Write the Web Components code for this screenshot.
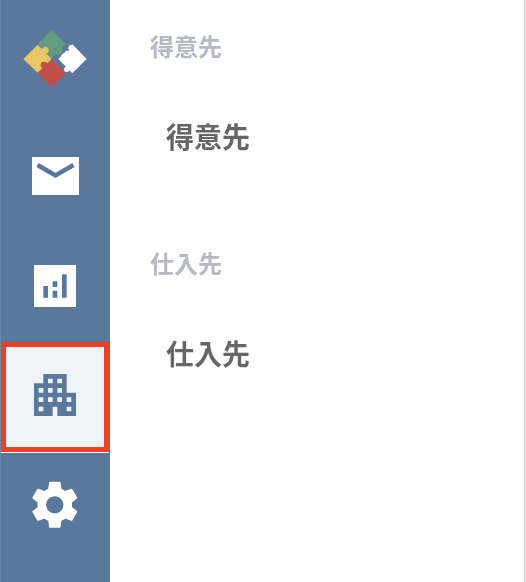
<!DOCTYPE html>
<html lang="ja"><head><meta charset="utf-8"><title>得意先</title>
<style>
html,body{margin:0;padding:0;height:100%;background:#fff;overflow:hidden}
body{font-family:"Noto Sans CJK JP","Noto Sans",sans-serif}
</style></head><body>
<app-shell>
  <side-nav slot="nav">
    <nav-item logo><svg width="110" height="121" viewBox="0 0 330 363">
      <path fill="#5f9d7c" d="M155 90L197 132L155 174L113 132Z"/>
      <circle fill="#5f9d7c" cx="176" cy="153" r="11"/>
      <path fill="#e9c765" d="M113 134L155 176L113 218L70 177Z"/>
      <circle fill="#e9c765" cx="136" cy="151" r="10"/>
      <path fill="#c44e4c" d="M155 178L197 220L155 262L113 220Z"/>
      <circle fill="#c44e4c" cx="132" cy="195" r="10"/>
      <path fill="#fff" d="M217 133L260 177L217 220L175 177Z"/>
      <circle fill="#fff" cx="196" cy="172" r="12"/>
      <circle fill="#5a779c" cx="203" cy="147" r="6"/>
      <circle fill="#fff" cx="214" cy="144" r="9"/>
      <circle fill="#5a779c" cx="189" cy="200" r="6"/>
      <circle fill="#fff" cx="200" cy="208" r="8"/>
    </svg></nav-item>
    <nav-item><svg width="47" height="38" viewBox="0 0 47 38">
      <rect width="47" height="38" fill="#fff"/>
      <path d="M5.5 8L23.5 18.5L41.5 8" fill="none" stroke="#5a779c" stroke-width="4.5"/>
    </svg></nav-item>
    <nav-item><svg width="42" height="42" viewBox="0 0 9 9">
      <rect width="9" height="9" fill="#fff"/>
      <path fill="#5a779c" d="M2 4.5h1V7H2zM4 3.5h1v1.2H4zM4 5.5h1V7H4zM6 2h1v5H6z"/>
    </svg></nav-item>
    <nav-item selected><svg width="42" height="42" viewBox="0 0 9 9">
      <path fill="#5a779c" fill-rule="evenodd" d="M2 0H7V4H9V9H5V7H4V9H0V2H2ZM3 1V2H4V1ZM5 1V2H6V1ZM1 3V4H2V3ZM3 3V4H4V3ZM5 3V4H6V3ZM1 5V6H2V5ZM3 5V6H4V5ZM5 5V6H6V5ZM7 5V6H8V5ZM1 7V8H2V7ZM7 7V8H8V7Z"/>
    </svg></nav-item>
    <nav-item last><svg width="57.6" height="57.6" viewBox="0 0 24 24">
      <path fill="#fff" d="M19.14 12.94c.04-.3.06-.61.06-.94 0-.32-.02-.64-.07-.94l2.03-1.58c.18-.14.23-.41.12-.61l-1.92-3.32c-.12-.22-.37-.29-.59-.22l-2.39.96c-.5-.38-1.03-.7-1.62-.94l-.36-2.54c-.04-.24-.24-.41-.48-.41h-3.84c-.24 0-.43.17-.47.41l-.36 2.54c-.59.24-1.13.57-1.62.94l-2.39-.96c-.22-.08-.47 0-.59.22L2.74 8.87c-.12.21-.08.47.12.61l2.03 1.58c-.05.3-.09.63-.09.94s.02.64.07.94l-2.03 1.58c-.18.14-.23.41-.12.61l1.92 3.32c.12.22.37.29.59.22l2.39-.96c.5.38 1.03.7 1.62.94l.36 2.54c.05.24.24.41.48.41h3.84c.24 0 .44-.17.47-.41l.36-2.54c.59-.24 1.13-.56 1.62-.94l2.39.96c.22.08.47 0 .59-.22l1.92-3.32c.12-.22.07-.47-.12-.61l-2.01-1.58zM12 15.6c-1.98 0-3.6-1.62-3.6-3.6s1.62-3.6 3.6-3.6 3.6 1.62 3.6 3.6-1.62 3.6-3.6 3.6z"/>
    </svg></nav-item>
  </side-nav>
  <menu-section heading="得意先"><menu-link>得意先</menu-link></menu-section>
  <menu-section heading="仕入先"><menu-link>仕入先</menu-link></menu-section>
</app-shell>
<script>
function def(name, css, html, extra){
  customElements.define(name, class extends HTMLElement{
    constructor(){super();this.attachShadow({mode:'open'}).innerHTML='<style>'+css+'</style>'+html;}
    connectedCallback(){ if(extra) extra.call(this); }
  });
}
def('app-shell',
 ':host{display:flex;height:582px;box-sizing:border-box;border-right:2px solid #ddd;background:#fff}main{flex:1;display:flex;flex-direction:column;padding-left:40px;min-width:0}',
 '<slot name="nav"></slot><main><slot></slot></main>');
def('side-nav',
 ':host{display:flex;flex-direction:column;width:110px;flex:none;height:582px;background:#5a779c;box-sizing:border-box;box-shadow:inset 1px 0 0 #6d87a8}',
 '<slot></slot>');
def('nav-item',
 ':host{display:flex;align-items:center;justify-content:center;height:110px;flex:none;box-sizing:border-box}'+
 ':host([logo]){height:121px}'+
 ':host([last]){height:104px;margin-top:1px}'+
 ':host([selected]){background:#eff4f9;border:5px solid #ee4023;margin:1px 1px 0;padding-bottom:4px;box-shadow:0 1px 0 #fff}',
 '<slot></slot>');
def('menu-section',
 ':host{display:block;height:217px;box-sizing:border-box;padding-top:29px;will-change:transform}'+
 'h2{margin:0;font:700 24px/34px "Noto Sans CJK JP","Noto Sans",sans-serif;color:#b6b8c2;height:34px}'+
 '.items{padding:53px 0 0 16px}',
 '<h2></h2><div class="items"><slot></slot></div>',
 function(){this.shadowRoot.querySelector('h2').textContent=this.getAttribute('heading');});
def('menu-link',
 ':host{display:block;font:700 28px/40px "Noto Sans CJK JP","Noto Sans",sans-serif;color:#666}',
 '<slot></slot>');
</script>
</body></html>
